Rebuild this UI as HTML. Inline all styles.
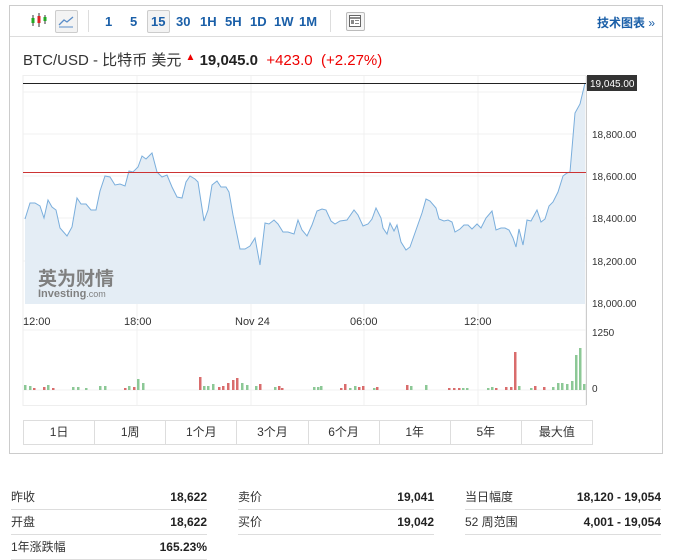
<!DOCTYPE html>
<html><head><meta charset="utf-8"><style>
body{margin:0;background:#fff;font-family:"Liberation Sans","Noto Sans CJK SC",sans-serif;width:677px;height:557px;overflow:hidden;position:relative}
.abs{position:absolute}
.tb{color:#1a5fa8;font-weight:bold;font-size:13px;top:14px}
.row{position:absolute;font-size:12px;color:#333;height:24px;border-bottom:1px solid #ddd;display:flex;justify-content:space-between;align-items:center;line-height:16px}
.row b{font-weight:bold;color:#222}
</style></head><body>
<div class="abs" style="left:9px;top:5px;width:652px;height:447px;border:1px solid #ccc"></div>
<div class="abs" style="left:10px;top:36px;width:652px;height:1px;background:#ddd"></div>
<svg class="abs" style="left:30px;top:12px" width="20" height="16"><line x1="3" y1="3" x2="3" y2="14" stroke="#333"/><rect x="1.5" y="6" width="3" height="5" fill="#2a2" /><line x1="9" y1="1" x2="9" y2="15" stroke="#333"/><rect x="7.5" y="4" width="3" height="7" fill="#d22"/><line x1="15" y1="3" x2="15" y2="12" stroke="#333"/><rect x="13.5" y="5" width="3" height="4" fill="#2a2"/></svg>
<div class="abs" style="left:55px;top:10px;width:21px;height:21px;border:1px solid #ccc;border-radius:2px;background:#f3f3f3"></div>
<svg class="abs" style="left:58px;top:13px" width="16" height="16"><polyline points="1,12 6,7 9,9 15,4" fill="none" stroke="#5a8dc8" stroke-width="1.3"/><line x1="1" y1="14" x2="15" y2="14" stroke="#5a8dc8"/></svg>
<div class="abs" style="left:88px;top:10px;width:1px;height:22px;background:#ddd"></div>
<div class="abs tb" style="left:105px">1</div>
<div class="abs tb" style="left:130px">5</div>
<div class="abs" style="left:147px;top:10px;width:21px;height:21px;border:1px solid #ccc;border-radius:2px;background:#f3f3f3"></div>
<div class="abs tb" style="left:151px">15</div>
<div class="abs tb" style="left:176px">30</div>
<div class="abs tb" style="left:200px">1H</div>
<div class="abs tb" style="left:225px">5H</div>
<div class="abs tb" style="left:250px">1D</div>
<div class="abs tb" style="left:274px">1W</div>
<div class="abs tb" style="left:299px">1M</div>
<div class="abs" style="left:330px;top:10px;width:1px;height:22px;background:#ddd"></div>
<div class="abs" style="left:346px;top:12px;width:17px;height:17px;border:1px solid #bbb;border-radius:2px;background:#f5f5f5"></div>
<svg class="abs" style="left:349px;top:15px" width="12" height="12"><rect x="0.5" y="0.5" width="11" height="11" fill="#fff" stroke="#666"/><line x1="0" y1="3" x2="12" y2="3" stroke="#666" stroke-width="1.5"/><rect x="2" y="5" width="3" height="4" fill="#888"/><line x1="6" y1="5.5" x2="10" y2="5.5" stroke="#888"/><line x1="6" y1="8.5" x2="10" y2="8.5" stroke="#888"/></svg>
<div class="abs tb" style="left:597px;font-size:12px;top:14px">技术图表 <span style="font-weight:normal">»</span></div>
<div class="abs" style="left:23px;top:49px;font-size:15px;color:#333;white-space:nowrap">BTC/USD - 比特币 美元 <span style="color:#e00;font-size:10px;vertical-align:5px">▲</span> <b style="color:#222">19,045.0</b> &nbsp;<span style="color:#e00">+423.0</span> &nbsp;<span style="color:#e00">(+2.27%)</span></div>
<svg class="abs" style="left:0;top:0" width="677" height="460" font-family="Liberation Sans, sans-serif" font-size="10" fill="#333">
<rect x="23" y="75.5" width="563" height="330" fill="none" stroke="#eee"/>
<g stroke="#f0f0f0"><line x1="137" y1="76" x2="137" y2="405"/><line x1="251" y1="76" x2="251" y2="405"/><line x1="364" y1="76" x2="364" y2="405"/><line x1="478" y1="76" x2="478" y2="405"/>
<line x1="23" y1="92" x2="586" y2="92"/><line x1="23" y1="134" x2="586" y2="134"/><line x1="23" y1="176" x2="586" y2="176"/><line x1="23" y1="218" x2="586" y2="218"/><line x1="23" y1="261" x2="586" y2="261"/><line x1="23" y1="330" x2="586" y2="330"/><line x1="23" y1="390" x2="586" y2="390"/></g>
<polygon fill="#e4edf5" points="25,304 25,219 30,203 35,203 40,206 44,218 48,200 52,207 56,210 60,228 67,236 72,227 77,198 81,204 86,204 91,210 96,210 100,191 105,176 110,177 115,185 120,184 125,186 129,171 133,172 138,167 142,156 146,159 152,153 157,172 162,177 167,175 172,187 177,197 182,198 186,182 190,176 195,179 198,182 204,221 208,210 212,185 217,181 221,187 226,187 229,192 233,215 240,249 245,249 250,246 255,238 260,265 265,223 269,224 274,220 278,224 283,232 288,232 294,234 298,220 302,230 307,236 312,225 317,211 322,209 326,210 331,221 335,224 340,221 347,220 354,210 358,215 363,226 368,224 372,219 376,208 381,218 383,228 387,234 390,223 394,231 397,225 401,242 406,250 410,247 416,230 422,213 426,199 430,201 436,208 439,219 444,221 448,220 452,222 455,232 460,229 464,225 468,225 472,229 477,224 481,228 486,218 492,211 496,230 501,228 505,228 509,230 513,238 516,247 519,229 523,245 527,220 531,221 537,210 541,222 545,219 549,206 553,202 558,192 563,176 567,173 570,172 575,113 580,104 585,83 585,304"/>
<polyline fill="none" stroke="#7aaedc" stroke-width="1" points="25,219 30,203 35,203 40,206 44,218 48,200 52,207 56,210 60,228 67,236 72,227 77,198 81,204 86,204 91,210 96,210 100,191 105,176 110,177 115,185 120,184 125,186 129,171 133,172 138,167 142,156 146,159 152,153 157,172 162,177 167,175 172,187 177,197 182,198 186,182 190,176 195,179 198,182 204,221 208,210 212,185 217,181 221,187 226,187 229,192 233,215 240,249 245,249 250,246 255,238 260,265 265,223 269,224 274,220 278,224 283,232 288,232 294,234 298,220 302,230 307,236 312,225 317,211 322,209 326,210 331,221 335,224 340,221 347,220 354,210 358,215 363,226 368,224 372,219 376,208 381,218 383,228 387,234 390,223 394,231 397,225 401,242 406,250 410,247 416,230 422,213 426,199 430,201 436,208 439,219 444,221 448,220 452,222 455,232 460,229 464,225 468,225 472,229 477,224 481,228 486,218 492,211 496,230 501,228 505,228 509,230 513,238 516,247 519,229 523,245 527,220 531,221 537,210 541,222 545,219 549,206 553,202 558,192 563,176 567,173 570,172 575,113 580,104 585,83"/>
<line x1="23" y1="83.5" x2="586" y2="83.5" stroke="#222"/>
<line x1="23" y1="172.5" x2="586" y2="172.5" stroke="#c33"/>
<line x1="586.5" y1="76" x2="586.5" y2="405" stroke="#ccc"/>
<rect x="587" y="75" width="50" height="16" fill="#333"/>
<text x="590" y="87" fill="#fff" font-size="10">19,045.00</text>
<text x="592" y="138">18,800.00</text><text x="592" y="180">18,600.00</text><text x="592" y="222">18,400.00</text><text x="592" y="265">18,200.00</text><text x="592" y="307">18,000.00</text>
<text x="592" y="336">1250</text><text x="592" y="392">0</text>
<text x="23" y="325" font-size="11">12:00</text><text x="124" y="325" font-size="11">18:00</text><text x="235" y="325" font-size="11">Nov 24</text><text x="350" y="325" font-size="11">06:00</text><text x="464" y="325" font-size="11">12:00</text>
<text x="38" y="285" font-size="19" font-weight="bold" fill="#808080" font-family="Liberation Sans, Noto Sans CJK SC, sans-serif">英为财情</text>
<text x="38" y="297" font-size="11" font-weight="bold" fill="#808080">Investing<tspan font-weight="normal" font-size="9">.com</tspan></text>
<g fill="#8cc896">
<rect x="24" y="385" width="2.5" height="5"/><rect x="29" y="386" width="2.5" height="4"/><rect x="47" y="385" width="2.5" height="5"/><rect x="72" y="387" width="2.5" height="3"/><rect x="77" y="387" width="2.5" height="3"/><rect x="85" y="388" width="2.5" height="2"/><rect x="99" y="386" width="2.5" height="4"/><rect x="104" y="386" width="2.5" height="4"/><rect x="128" y="386" width="2.5" height="4"/><rect x="137" y="379" width="2.5" height="11"/><rect x="142" y="383" width="2.5" height="7"/><rect x="203" y="386" width="2.5" height="4"/><rect x="207" y="386" width="2.5" height="4"/><rect x="212" y="384" width="2.5" height="6"/><rect x="241" y="383" width="2.5" height="7"/><rect x="246" y="385" width="2.5" height="5"/><rect x="255" y="386" width="2.5" height="4"/><rect x="274" y="387" width="2.5" height="3"/><rect x="313" y="387" width="2.5" height="3"/><rect x="317" y="387" width="2.5" height="3"/><rect x="320" y="386" width="2.5" height="4"/><rect x="349" y="388" width="2.5" height="2"/><rect x="354" y="386" width="2.5" height="4"/><rect x="373" y="388" width="2.5" height="2"/><rect x="410" y="386" width="2.5" height="4"/><rect x="425" y="385" width="2.5" height="5"/><rect x="462" y="388" width="2.5" height="2"/><rect x="466" y="388" width="2.5" height="2"/><rect x="487" y="388" width="2.5" height="2"/><rect x="491" y="387" width="2.5" height="3"/><rect x="518" y="386" width="2.5" height="4"/><rect x="530" y="388" width="2.5" height="2"/><rect x="552" y="387" width="2.5" height="3"/><rect x="557" y="383" width="2.5" height="7"/><rect x="561" y="383" width="2.5" height="7"/><rect x="566" y="384" width="2.5" height="6"/><rect x="571" y="381" width="2.5" height="9"/><rect x="575" y="355" width="2.5" height="35"/><rect x="579" y="348" width="2.5" height="42"/><rect x="583" y="384" width="2.5" height="6"/></g>
<g fill="#d96c6c">
<rect x="33" y="388" width="2.5" height="2"/><rect x="43" y="387" width="2.5" height="3"/><rect x="52" y="388" width="2.5" height="2"/><rect x="124" y="388" width="2.5" height="2"/><rect x="133" y="387" width="2.5" height="3"/><rect x="199" y="377" width="2.5" height="13"/><rect x="218" y="387" width="2.5" height="3"/><rect x="222" y="386" width="2.5" height="4"/><rect x="227" y="383" width="2.5" height="7"/><rect x="232" y="380" width="2.5" height="10"/><rect x="236" y="378" width="2.5" height="12"/><rect x="259" y="384" width="2.5" height="6"/><rect x="278" y="386" width="2.5" height="4"/><rect x="281" y="388" width="2.5" height="2"/><rect x="340" y="388" width="2.5" height="2"/><rect x="344" y="384" width="2.5" height="6"/><rect x="358" y="387" width="2.5" height="3"/><rect x="362" y="386" width="2.5" height="4"/><rect x="376" y="387" width="2.5" height="3"/><rect x="406" y="385" width="2.5" height="5"/><rect x="448" y="388" width="2.5" height="2"/><rect x="453" y="388" width="2.5" height="2"/><rect x="458" y="388" width="2.5" height="2"/><rect x="495" y="388" width="2.5" height="2"/><rect x="505" y="387" width="2.5" height="3"/><rect x="510" y="387" width="2.5" height="3"/><rect x="514" y="352" width="2.5" height="38"/><rect x="534" y="386" width="2.5" height="4"/><rect x="543" y="387" width="2.5" height="3"/></g>
</svg>
<div class="abs" style="left:23px;top:420px;width:568px;height:23px;border:1px solid #ddd;display:flex;font-size:12px;color:#333">
<div style="flex:1;text-align:center;line-height:23px;border-right:1px solid #ddd">1日</div><div style="flex:1;text-align:center;line-height:23px;border-right:1px solid #ddd">1周</div><div style="flex:1;text-align:center;line-height:23px;border-right:1px solid #ddd">1个月</div><div style="flex:1;text-align:center;line-height:23px;border-right:1px solid #ddd">3个月</div><div style="flex:1;text-align:center;line-height:23px;border-right:1px solid #ddd">6个月</div><div style="flex:1;text-align:center;line-height:23px;border-right:1px solid #ddd">1年</div><div style="flex:1;text-align:center;line-height:23px;border-right:1px solid #ddd">5年</div><div style="flex:1;text-align:center;line-height:23px">最大值</div></div>
<div class="row" style="left:11px;top:485px;width:196px"><span>昨收</span><b>18,622</b></div>
<div class="row" style="left:11px;top:510px;width:196px"><span>开盘</span><b>18,622</b></div>
<div class="row" style="left:11px;top:535px;width:196px"><span>1年涨跌幅</span><b>165.23%</b></div>
<div class="row" style="left:238px;top:485px;width:196px"><span>卖价</span><b>19,041</b></div>
<div class="row" style="left:238px;top:510px;width:196px"><span>买价</span><b>19,042</b></div>
<div class="row" style="left:465px;top:485px;width:196px"><span>当日幅度</span><b>18,120 - 19,054</b></div>
<div class="row" style="left:465px;top:510px;width:196px"><span>52 周范围</span><b>4,001 - 19,054</b></div>
</body></html>
